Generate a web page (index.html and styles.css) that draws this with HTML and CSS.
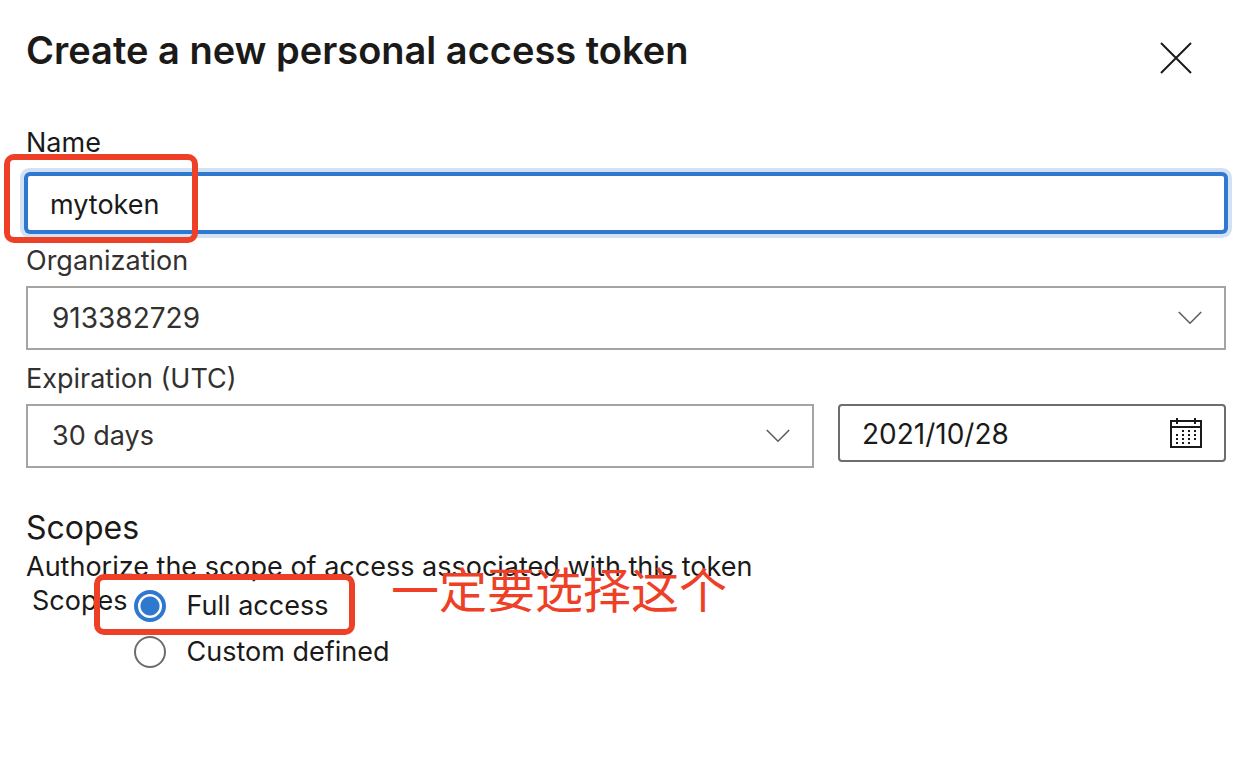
FILE: index.html
```html
<!DOCTYPE html>
<html lang="en">
<head>
<meta charset="utf-8">
<title>Create a new personal access token</title>
<link rel="stylesheet" href="styles.css">
</head>
<body>
<main class="panel">
  <header class="panel-header">
    <h1 class="title">Create a new personal access token</h1>
    <button class="close" type="button" aria-label="Close">
      <svg width="32" height="32" viewBox="0 0 32 32" fill="none" stroke="#1b1a19" stroke-width="2"><path d="M1 1 31 31M31 1 1 31"/></svg>
    </button>
  </header>
  <form class="form">
    <div class="field field-name">
      <label class="label" for="name">Name</label>
      <div class="control">
        <input class="input input-focused" id="name" type="text" value="mytoken">
        <span class="mark mark-name"></span>
      </div>
    </div>
    <div class="field">
      <label class="label label-muted" for="org">Organization</label>
      <div class="control">
        <select class="select numeric" id="org"><option>913382729</option></select>
        <svg class="chevron" width="24" height="14" viewBox="0 0 24 14" fill="none" stroke="#605e5c" stroke-width="1.6"><path d="M.8 1 12 12.200 23.200 1"/></svg>
      </div>
    </div>
    <div class="field">
      <label class="label label-muted" for="expiration">Expiration (UTC)</label>
      <div class="expiration">
        <div class="control">
          <select class="select" id="expiration"><option>30 days</option></select>
          <svg class="chevron" width="24" height="14" viewBox="0 0 24 14" fill="none" stroke="#605e5c" stroke-width="1.6"><path d="M.8 1 12 12.200 23.200 1"/></svg>
        </div>
        <div class="control">
          <input class="input numeric" type="text" value="2021/10/28" aria-label="Expiration date">
          <svg class="calendar" width="32" height="30" viewBox="0 0 32 30" shape-rendering="crispEdges">
            <path fill="none" stroke="#1b1a19" stroke-width="2" d="M1 3H31V29H1ZM1 9H31M7 0V6M25 0V6"/>
            <path fill="#1b1a19" d="M12 12h2v2h-2zM18 12h2v2h-2zM24 12h2v2h-2zM6 16h2v2H6zM12 16h2v2h-2zM18 16h2v2h-2zM24 16h2v2h-2zM6 20h2v2H6zM12 20h2v2h-2zM18 20h2v2h-2zM24 20h2v2h-2zM6 24h2v2H6zM12 24h2v2h-2zM18 24h2v2h-2z"/>
          </svg>
        </div>
      </div>
    </div>
    <section class="scopes">
      <h2 class="subtitle">Scopes</h2>
      <p class="description">Authorize the scope of access associated with this token</p>
      <div class="scope-row" role="radiogroup" aria-labelledby="scope-label">
        <span class="scope-label" id="scope-label">Scopes</span>
        <div class="options">
          <label class="option" for="full"><input class="radio" id="full" type="radio" name="scope" checked>Full access</label>
          <label class="option" for="custom"><input class="radio" id="custom" type="radio" name="scope">Custom defined</label>
        </div>
        <span class="mark mark-scope"></span>
        <span class="note" lang="zh-CN">一定要选择这个</span>
      </div>
    </section>
  </form>
</main>
</body>
</html>
```
FILE: styles.css
```css
* {
  box-sizing: border-box;
}

body {
  margin: 0;
  background: #fff;
  color: #1b1a19;
  font: 27px/38px Inter, "Noto Sans CJK SC", sans-serif;
}

.panel {
  padding: 24px 28px 24px 26px;
}

.panel-header {
  display: flex;
  justify-content: space-between;
  align-items: flex-start;
  padding-right: 34px;
  margin-bottom: 48px;
}

.title {
  margin: 0;
  font-size: 38px;
  font-weight: 600;
  line-height: 52px;
}

.close {
  display: flex;
  margin-top: 18px;
  padding: 0;
  border: 0;
  background: none;
}

.form,
.field {
  display: flex;
  flex-direction: column;
}

.form {
  gap: 10px;
}

.field {
  gap: 6px;
}

.field-name {
  gap: 12px;
}

.label-muted {
  color: #323130;
}

.control {
  position: relative;
  display: grid;
  align-items: center;
}

.input,
.select {
  width: 100%;
  min-width: 0;
  margin: 0;
  background: #fff;
  font: inherit;
  outline: 0;
}

.numeric {
  font-size: 28px;
}

.input {
  height: 58px;
  padding: 2px 22px 0;
  border: 2px solid #6e6d6c;
  border-radius: 4px;
  color: #1b1a19;
}

.input-focused {
  border-color: #2f78d0;
  box-shadow: 0 0 0 2px #2f78d0, 0 0 0 6px #d3e1f5;
}

.select {
  height: 64px;
  padding: 0 24px;
  border: 2px solid #a6a5a4;
  border-radius: 0;
  appearance: none;
  color: #323130;
}

.chevron,
.calendar {
  position: absolute;
  right: 24px;
  pointer-events: none;
}

.expiration {
  display: grid;
  grid-template-columns: 788fr 388fr;
  gap: 24px;
  align-items: start;
}

.scopes {
  margin-top: 30px;
}

.subtitle {
  margin: 0;
  font-size: 32px;
  font-weight: 400;
  line-height: 40px;
}

.description {
  margin: 0;
}

.scope-row {
  position: relative;
  display: flex;
  gap: 7px;
  padding-left: 6px;
}

.options {
  display: flex;
  flex-direction: column;
  gap: 8px;
  padding-top: 1px;
}

.option {
  display: flex;
  align-items: center;
  gap: 20px;
}

.scope-label {
  line-height: 30px;
}

.radio {
  appearance: none;
  width: 32px;
  height: 32px;
  margin: 0;
  border: 2px solid #6e6d6c;
  border-radius: 50%;
  background: #fff;
}

.radio:checked {
  border: 4px solid #2f78d0;
  background: radial-gradient(circle, #2f78d0 9px, #fff 10px);
}

.mark {
  position: absolute;
  border: 6px solid #ee4026;
  border-radius: 10px;
  pointer-events: none;
}

.mark-name {
  top: -20px;
  left: -22px;
  width: 194px;
  height: 89px;
}

.mark-scope {
  top: -12px;
  left: 68px;
  width: 261px;
  height: 61px;
}

.note {
  position: absolute;
  top: -27px;
  left: 365px;
  color: #ee4026;
  font-family: "Noto Sans CJK SC", sans-serif;
  font-size: 48px;
  line-height: 56px;
  white-space: nowrap;
}
```
